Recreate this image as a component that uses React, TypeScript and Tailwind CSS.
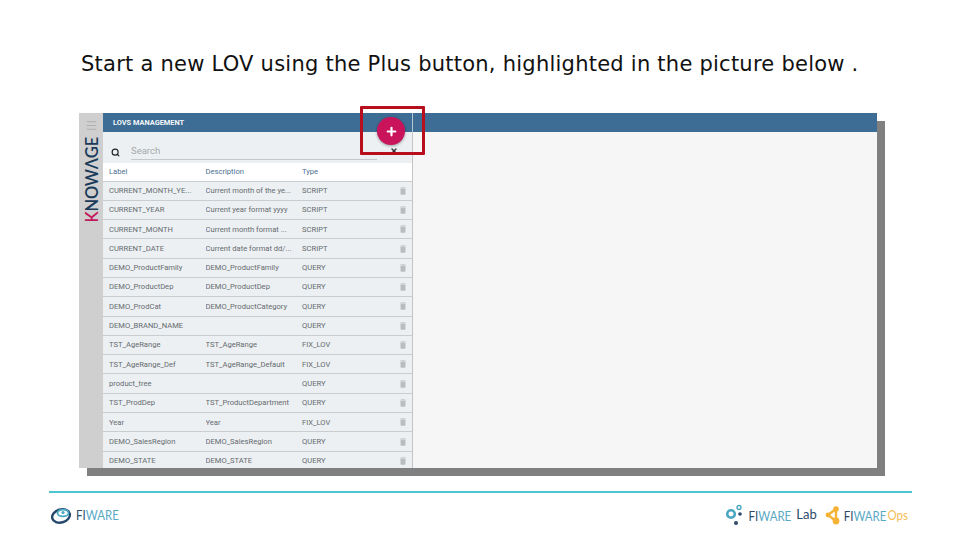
import { Menu, Plus, Search, X } from "lucide-react";

const rows = [
  ["CURRENT_MONTH_YE...", "Current month of the ye...", "SCRIPT"],
  ["CURRENT_YEAR", "Current year format yyyy", "SCRIPT"],
  ["CURRENT_MONTH", "Current month format ...", "SCRIPT"],
  ["CURRENT_DATE", "Current date format dd/...", "SCRIPT"],
  ["DEMO_ProductFamily", "DEMO_ProductFamily", "QUERY"],
  ["DEMO_ProductDep", "DEMO_ProductDep", "QUERY"],
  ["DEMO_ProdCat", "DEMO_ProductCategory", "QUERY"],
  ["DEMO_BRAND_NAME", "", "QUERY"],
  ["TST_AgeRange", "TST_AgeRange", "FIX_LOV"],
  ["TST_AgeRange_Def", "TST_AgeRange_Default", "FIX_LOV"],
  ["product_tree", "", "QUERY"],
  ["TST_ProdDep", "TST_ProductDepartment", "QUERY"],
  ["Year", "Year", "FIX_LOV"],
  ["DEMO_SalesRegion", "DEMO_SalesRegion", "QUERY"],
  ["DEMO_STATE", "DEMO_STATE", "QUERY"],
];

function FiwareWord() {
  return (
    <span className="inline-block origin-center scale-y-[1.2] font-['Lato',sans-serif] text-[11.5px] leading-none text-[#2b4a6b]">
      FI<span className="text-[#5aa9c4]">WARE</span>
    </span>
  );
}

function TrashIcon() {
  return (
    <svg className="mr-[4px] shrink-0 fill-[#b9bdc0]" width="10" height="10" viewBox="0 0 24 24">
      <path d="M6 19c0 1.1.9 2 2 2h8c1.1 0 2-.9 2-2V7H6v12zM19 4h-3.5l-1-1h-5l-1 1H5v2h14V4z" />
    </svg>
  );
}

function LovRow({ row }: { row: string[] }) {
  return (
    <div className="flex h-[19.3px] shrink-0 items-center border-b border-[#c9cdd0] pl-[6px] text-[7.6px] text-[#666b70]">
      <span className="w-[96.5px] truncate">{row[0]}</span>
      <span className="w-[96.5px] truncate">{row[1]}</span>
      <span className="flex-1">{row[2]}</span>
      <TrashIcon />
    </div>
  );
}

export default function App() {
  return (
    <div className="relative flex h-[540px] w-[960px] flex-col overflow-hidden bg-white font-['Roboto',sans-serif]">
      <h1 className="flex h-[113px] shrink-0 items-start pl-[81px] pt-[51px] font-['DejaVu_Sans',sans-serif] text-[21px] leading-[26px] tracking-[0.24px] text-[#111]">
        Start a new LOV using the Plus button, highlighted in the picture below .
      </h1>

      <div className="ml-[79px] flex h-[355px] w-[798px] shrink-0 shadow-[8px_8px_0_#808080]">
        <aside className="flex w-[24px] shrink-0 flex-col items-center bg-[#cfcfcf] pt-[6px]">
          <Menu className="text-[#949494]" size={13} strokeWidth={1} />
          <span className="ml-[2px] mt-[5px] rotate-180 font-['Lato',sans-serif] text-[16.5px] font-semibold leading-none tracking-[-0.2px] text-[#1a3a5a] [writing-mode:vertical-rl]">
            <span className="text-[#c2185b]">K</span>NOWΛGE
          </span>
        </aside>

        <div className="flex min-w-0 flex-1 flex-col">
          <header className="flex h-[19px] shrink-0 bg-[#3d6d94] text-[7.4px] font-bold text-[#f4f7f9]">
            <div className="flex w-[310px] items-center border-r border-[#b5c6d4] pl-[10px]">LOVS MANAGEMENT</div>
          </header>
          <div className="flex min-h-0 flex-1 bg-[#f6f6f6]">
            <section className="flex w-[310px] shrink-0 flex-col overflow-hidden border-r border-[#c4c4c4] bg-[#ecf0f2]">
              <div className="flex h-[30.5px] shrink-0 items-end pb-[3px] pl-[8px]">
                <Search className="mb-[3px] text-[#222]" size={9} strokeWidth={3} />
                <div className="ml-[11px] h-[17px] w-[246px] border-b border-[#c4c8ca] text-[9.5px] leading-[16px] text-[#a4a9ad]">
                  Search
                </div>
              </div>
              <div className="flex h-[19px] shrink-0 items-center border-b border-[#c9cdd0] bg-white pl-[6px] text-[7.6px] text-[#4a6f8f]">
                <span className="w-[96.5px]">Label</span>
                <span className="w-[96.5px]">Description</span>
                <span>Type</span>
              </div>
              {rows.map((row) => (
                <LovRow key={row[0]} row={row} />
              ))}
            </section>
          </div>
        </div>
      </div>

      <footer className="ml-[49px] mt-[23px] flex w-[863px] flex-col">
        <div className="h-[1.5px] bg-[#4fc6cf]" />
        <div className="flex items-center justify-between pl-[2px] pr-[4px] pt-[10px]">
          <div className="flex items-center gap-[3px]">
            <svg width="22" height="18" viewBox="0 0 22 18">
              <ellipse cx="10" cy="10" rx="9" ry="6.5" fill="none" stroke="#24476b" strokeWidth="2.4" transform="rotate(-15 10 10)" />
              <ellipse cx="12" cy="7.5" rx="6" ry="4" fill="#ffffff" />
              <ellipse cx="12" cy="7" rx="5.5" ry="3.4" fill="none" stroke="#49a7c1" strokeWidth="1.8" />
              <circle cx="12" cy="6.5" r="1.6" fill="#49a7c1" />
            </svg>
            <FiwareWord />
          </div>
          <div className="flex items-center">
            <svg width="20" height="22" viewBox="0 0 20 22">
              <circle cx="7" cy="10" r="3.8" fill="none" stroke="#49a7c1" strokeWidth="2.6" />
              <circle cx="15" cy="3.5" r="2" fill="none" stroke="#49a7c1" strokeWidth="1.4" />
              <circle cx="16" cy="10" r="1.8" fill="#2b4a6b" />
              <circle cx="12" cy="19" r="2" fill="#2b4a6b" />
            </svg>
            <span className="ml-[4px]"><FiwareWord /></span>
            <span className="ml-[5px] font-['Lato',sans-serif] text-[13px] leading-none text-[#2b4a6b]">Lab</span>
            <svg className="ml-[7px]" width="18" height="22" viewBox="0 0 18 22">
              <path d="M4 11 L12 5 M4 11 L12 17 M12 5 L12 17" stroke="#f5b335" strokeWidth="2.4" fill="none" />
              <circle cx="4" cy="11" r="2.4" fill="#f5b335" />
              <circle cx="12" cy="5" r="2.8" fill="#f5b335" />
              <circle cx="12" cy="17" r="3.4" fill="#f5b335" />
            </svg>
            <span className="ml-[2px]"><FiwareWord /></span>
            <span className="ml-[1px] inline-block scale-y-[1.2] font-['Lato',sans-serif] text-[11.5px] leading-none text-[#f3bd57]">Ops</span>
          </div>
        </div>
      </footer>

      {/* floating add button and the red highlight over it */}
      <X className="absolute left-[390px] top-[147px] text-[#333]" size={8} strokeWidth={4} />
      <button className="absolute left-[377px] top-[117px] flex h-[28px] w-[28px] items-center justify-center rounded-full bg-[#c9145c] shadow-[0_1px_3px_rgba(0,0,0,0.35)]">
        <Plus className="text-white" size={13} strokeWidth={4} />
      </button>
      <div className="absolute left-[360px] top-[106px] h-[49px] w-[65px] rounded-[1px] border-[3px] border-[#b80f1e]" />
    </div>
  );
}
